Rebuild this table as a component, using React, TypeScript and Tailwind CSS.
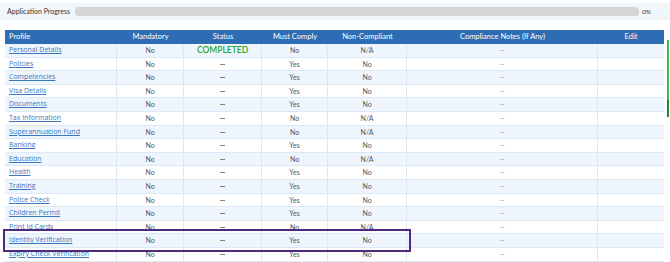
import React from "react";

type Row = { name: string; mand: string; status: string; must: string; non: string };

const rows: Row[] = [
  { name: "Personal Details", mand: "No", status: "COMPLETED", must: "No", non: "N/A" },
  { name: "Policies", mand: "No", status: "--", must: "Yes", non: "No" },
  { name: "Competencies", mand: "No", status: "--", must: "Yes", non: "No" },
  { name: "Visa Details", mand: "No", status: "--", must: "Yes", non: "No" },
  { name: "Documents", mand: "No", status: "--", must: "Yes", non: "No" },
  { name: "Tax Information", mand: "No", status: "--", must: "No", non: "N/A" },
  { name: "Superannuation Fund", mand: "No", status: "--", must: "No", non: "N/A" },
  { name: "Banking", mand: "No", status: "--", must: "Yes", non: "No" },
  { name: "Education", mand: "No", status: "--", must: "No", non: "N/A" },
  { name: "Health", mand: "No", status: "--", must: "Yes", non: "No" },
  { name: "Training", mand: "No", status: "--", must: "Yes", non: "No" },
  { name: "Police Check", mand: "No", status: "--", must: "Yes", non: "No" },
  { name: "Children Permit", mand: "No", status: "--", must: "Yes", non: "No" },
  { name: "Print Id Cards", mand: "No", status: "--", must: "No", non: "N/A" },
  { name: "Identity Verification", mand: "No", status: "--", must: "Yes", non: "No" },
  { name: "Expiry Check Verification", mand: "No", status: "--", must: "Yes", non: "No" },
];

const cols = "grid grid-cols-[112px_67px_78px_66px_79px_191px_66px]";

export default function App() {
  return (
    <div
      className="relative w-[670px] h-[262px] overflow-hidden bg-white"
      style={{ fontFamily: "Lato, 'Open Sans', sans-serif" }}
    >
      <div className="mt-[3px] h-[17px] bg-[#f1f6fb] flex items-center pl-[7px] pr-[4px]">
        <span className="text-[7px] text-[#333] w-[68px]">Application Progress</span>
        <div className="h-[9px] w-[564px] rounded-[3px] bg-[#d6d6d6]" />
        <span className="ml-[3px] text-[6.5px] text-[#333]">0%</span>
      </div>

      <div className="ml-[5px] mt-[10px] w-[659px]">
        <div className={`${cols} h-[14px] bg-[#2e6db4] text-white text-[7.5px] items-center`}>
          <div className="pl-[4px]">Profile</div>
          <div className="text-center">Mandatory</div>
          <div className="text-center">Status</div>
          <div className="text-center">Must Comply</div>
          <div className="text-center">Non-Compliant</div>
          <div className="text-center">Compliance Notes (If Any)</div>
          <div className="text-center">Edit</div>
        </div>
        {rows.map((r, i) => (
          <div
            key={r.name}
            className={`${cols} h-[13.6px] items-stretch border-b border-[#dbe8f5] text-[7px] text-[#555] ${
              i % 2 === 0 ? "bg-[#eef5fc]" : "bg-white"
            }`}
          >
            <div className="pl-[4px] flex items-center border-r border-[#dbe8f5]">
              <span className="text-[#3b77c0] underline text-[7px]" style={{ fontFamily: "'Open Sans', Lato, sans-serif" }}>
                {r.name}
              </span>
            </div>
            <div className="flex items-center justify-center border-r border-[#dbe8f5]">{r.mand}</div>
            <div className="flex items-center justify-center border-r border-[#dbe8f5]">
              {r.status === "COMPLETED" ? (
                <span className="text-[#2aa52a] text-[8.5px] font-semibold">COMPLETED</span>
              ) : (
                <span className="text-[#333] font-bold">--</span>
              )}
            </div>
            <div className="flex items-center justify-center border-r border-[#dbe8f5]">{r.must}</div>
            <div className="flex items-center justify-center border-r border-[#dbe8f5]">{r.non}</div>
            <div className="flex items-center justify-center border-r border-[#dbe8f5] text-[#999]">--</div>
            <div />
          </div>
        ))}
      </div>

      <div className="absolute left-[3px] top-[229px] w-[408px] h-[23px] border-2 border-[#4e2a7e]" />
      <div className="absolute left-[667px] top-[40px] w-[2px] h-[60px] bg-[#4cb84c]" />
      <div className="absolute left-[667px] top-[100px] w-[2px] h-[17px] bg-[#2e7d32]" />
    </div>
  );
}
